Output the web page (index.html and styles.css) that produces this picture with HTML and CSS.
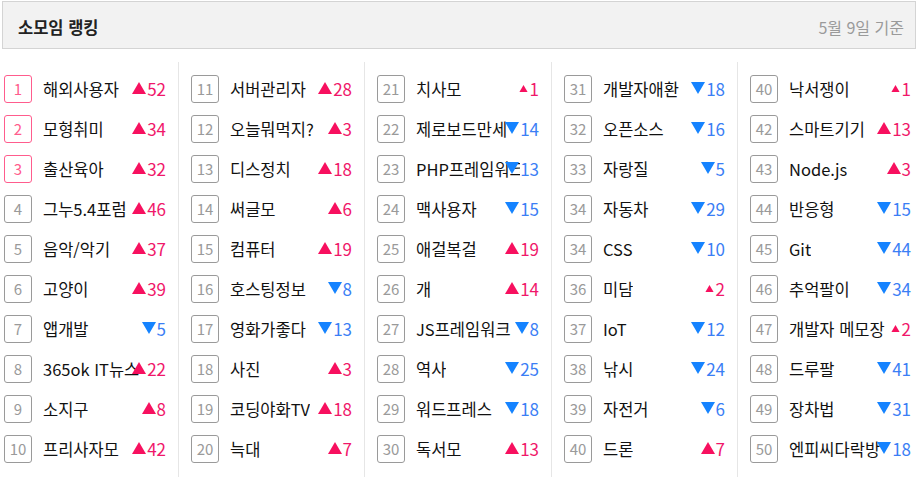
FILE: index.html
```html
<!DOCTYPE html>
<html lang="ko">
<head>
<meta charset="utf-8">
<title>소모임 랭킹</title>
<link rel="stylesheet" href="styles.css">
</head>
<body>
<div class="header">
  <h2 class="title">소모임 랭킹</h2>
  <span class="date">5월 9일 기준</span>
</div>
<div class="ranking">
  <ul class="col">
    <li class="row top"><span class="rank">1</span><span class="name">해외사용자</span><span class="chg up"><svg class="tri" viewBox="0 0 14 12"><polygon points="7,0 14,12 0,12"/></svg>52</span></li>
    <li class="row top"><span class="rank">2</span><span class="name">모형취미</span><span class="chg up"><svg class="tri" viewBox="0 0 14 12"><polygon points="7,0 14,12 0,12"/></svg>34</span></li>
    <li class="row top"><span class="rank">3</span><span class="name">출산육아</span><span class="chg up"><svg class="tri" viewBox="0 0 14 12"><polygon points="7,0 14,12 0,12"/></svg>32</span></li>
    <li class="row"><span class="rank">4</span><span class="name">그누5.4포럼</span><span class="chg up"><svg class="tri" viewBox="0 0 14 12"><polygon points="7,0 14,12 0,12"/></svg>46</span></li>
    <li class="row"><span class="rank">5</span><span class="name">음악/악기</span><span class="chg up"><svg class="tri" viewBox="0 0 14 12"><polygon points="7,0 14,12 0,12"/></svg>37</span></li>
    <li class="row"><span class="rank">6</span><span class="name">고양이</span><span class="chg up"><svg class="tri" viewBox="0 0 14 12"><polygon points="7,0 14,12 0,12"/></svg>39</span></li>
    <li class="row"><span class="rank">7</span><span class="name">앱개발</span><span class="chg down"><svg class="tri" viewBox="0 0 14 12"><polygon points="0,0 14,0 7,12"/></svg>5</span></li>
    <li class="row"><span class="rank">8</span><span class="name">365ok IT뉴스</span><span class="chg up"><svg class="tri" viewBox="0 0 14 12"><polygon points="7,0 14,12 0,12"/></svg>22</span></li>
    <li class="row"><span class="rank">9</span><span class="name">소지구</span><span class="chg up"><svg class="tri" viewBox="0 0 14 12"><polygon points="7,0 14,12 0,12"/></svg>8</span></li>
    <li class="row"><span class="rank">10</span><span class="name">프리사자모</span><span class="chg up"><svg class="tri" viewBox="0 0 14 12"><polygon points="7,0 14,12 0,12"/></svg>42</span></li>
  </ul>
  <ul class="col">
    <li class="row"><span class="rank">11</span><span class="name">서버관리자</span><span class="chg up"><svg class="tri" viewBox="0 0 14 12"><polygon points="7,0 14,12 0,12"/></svg>28</span></li>
    <li class="row"><span class="rank">12</span><span class="name">오늘뭐먹지?</span><span class="chg up"><svg class="tri" viewBox="0 0 14 12"><polygon points="7,0 14,12 0,12"/></svg>3</span></li>
    <li class="row"><span class="rank">13</span><span class="name">디스정치</span><span class="chg up"><svg class="tri" viewBox="0 0 14 12"><polygon points="7,0 14,12 0,12"/></svg>18</span></li>
    <li class="row"><span class="rank">14</span><span class="name">써글모</span><span class="chg up"><svg class="tri" viewBox="0 0 14 12"><polygon points="7,0 14,12 0,12"/></svg>6</span></li>
    <li class="row"><span class="rank">15</span><span class="name">컴퓨터</span><span class="chg up"><svg class="tri" viewBox="0 0 14 12"><polygon points="7,0 14,12 0,12"/></svg>19</span></li>
    <li class="row"><span class="rank">16</span><span class="name">호스팅정보</span><span class="chg down"><svg class="tri" viewBox="0 0 14 12"><polygon points="0,0 14,0 7,12"/></svg>8</span></li>
    <li class="row"><span class="rank">17</span><span class="name">영화가좋다</span><span class="chg down"><svg class="tri" viewBox="0 0 14 12"><polygon points="0,0 14,0 7,12"/></svg>13</span></li>
    <li class="row"><span class="rank">18</span><span class="name">사진</span><span class="chg up"><svg class="tri" viewBox="0 0 14 12"><polygon points="7,0 14,12 0,12"/></svg>3</span></li>
    <li class="row"><span class="rank">19</span><span class="name">코딩야화TV</span><span class="chg up"><svg class="tri" viewBox="0 0 14 12"><polygon points="7,0 14,12 0,12"/></svg>18</span></li>
    <li class="row"><span class="rank">20</span><span class="name">늑대</span><span class="chg up"><svg class="tri" viewBox="0 0 14 12"><polygon points="7,0 14,12 0,12"/></svg>7</span></li>
  </ul>
  <ul class="col">
    <li class="row"><span class="rank">21</span><span class="name">치사모</span><span class="chg up"><svg class="tri sm" viewBox="0 0 14 12"><polygon points="7,0 14,12 0,12"/></svg>1</span></li>
    <li class="row"><span class="rank">22</span><span class="name">제로보드만세</span><span class="chg down"><svg class="tri" viewBox="0 0 14 12"><polygon points="0,0 14,0 7,12"/></svg>14</span></li>
    <li class="row"><span class="rank">23</span><span class="name">PHP프레임워크</span><span class="chg down"><svg class="tri" viewBox="0 0 14 12"><polygon points="0,0 14,0 7,12"/></svg>13</span></li>
    <li class="row"><span class="rank">24</span><span class="name">맥사용자</span><span class="chg down"><svg class="tri" viewBox="0 0 14 12"><polygon points="0,0 14,0 7,12"/></svg>15</span></li>
    <li class="row"><span class="rank">25</span><span class="name">애걸복걸</span><span class="chg up"><svg class="tri" viewBox="0 0 14 12"><polygon points="7,0 14,12 0,12"/></svg>19</span></li>
    <li class="row"><span class="rank">26</span><span class="name">개</span><span class="chg up"><svg class="tri" viewBox="0 0 14 12"><polygon points="7,0 14,12 0,12"/></svg>14</span></li>
    <li class="row"><span class="rank">27</span><span class="name">JS프레임워크</span><span class="chg down"><svg class="tri" viewBox="0 0 14 12"><polygon points="0,0 14,0 7,12"/></svg>8</span></li>
    <li class="row"><span class="rank">28</span><span class="name">역사</span><span class="chg down"><svg class="tri" viewBox="0 0 14 12"><polygon points="0,0 14,0 7,12"/></svg>25</span></li>
    <li class="row"><span class="rank">29</span><span class="name">워드프레스</span><span class="chg down"><svg class="tri" viewBox="0 0 14 12"><polygon points="0,0 14,0 7,12"/></svg>18</span></li>
    <li class="row"><span class="rank">30</span><span class="name">독서모</span><span class="chg up"><svg class="tri" viewBox="0 0 14 12"><polygon points="7,0 14,12 0,12"/></svg>13</span></li>
  </ul>
  <ul class="col">
    <li class="row"><span class="rank">31</span><span class="name">개발자애환</span><span class="chg down"><svg class="tri" viewBox="0 0 14 12"><polygon points="0,0 14,0 7,12"/></svg>18</span></li>
    <li class="row"><span class="rank">32</span><span class="name">오픈소스</span><span class="chg down"><svg class="tri" viewBox="0 0 14 12"><polygon points="0,0 14,0 7,12"/></svg>16</span></li>
    <li class="row"><span class="rank">33</span><span class="name">자랑질</span><span class="chg down"><svg class="tri" viewBox="0 0 14 12"><polygon points="0,0 14,0 7,12"/></svg>5</span></li>
    <li class="row"><span class="rank">34</span><span class="name">자동차</span><span class="chg down"><svg class="tri" viewBox="0 0 14 12"><polygon points="0,0 14,0 7,12"/></svg>29</span></li>
    <li class="row"><span class="rank">34</span><span class="name">CSS</span><span class="chg down"><svg class="tri" viewBox="0 0 14 12"><polygon points="0,0 14,0 7,12"/></svg>10</span></li>
    <li class="row"><span class="rank">36</span><span class="name">미담</span><span class="chg up"><svg class="tri sm" viewBox="0 0 14 12"><polygon points="7,0 14,12 0,12"/></svg>2</span></li>
    <li class="row"><span class="rank">37</span><span class="name">IoT</span><span class="chg down"><svg class="tri" viewBox="0 0 14 12"><polygon points="0,0 14,0 7,12"/></svg>12</span></li>
    <li class="row"><span class="rank">38</span><span class="name">낚시</span><span class="chg down"><svg class="tri" viewBox="0 0 14 12"><polygon points="0,0 14,0 7,12"/></svg>24</span></li>
    <li class="row"><span class="rank">39</span><span class="name">자전거</span><span class="chg down"><svg class="tri" viewBox="0 0 14 12"><polygon points="0,0 14,0 7,12"/></svg>6</span></li>
    <li class="row"><span class="rank">40</span><span class="name">드론</span><span class="chg up"><svg class="tri" viewBox="0 0 14 12"><polygon points="7,0 14,12 0,12"/></svg>7</span></li>
  </ul>
  <ul class="col">
    <li class="row"><span class="rank">40</span><span class="name">낙서쟁이</span><span class="chg up"><svg class="tri sm" viewBox="0 0 14 12"><polygon points="7,0 14,12 0,12"/></svg>1</span></li>
    <li class="row"><span class="rank">42</span><span class="name">스마트기기</span><span class="chg up"><svg class="tri" viewBox="0 0 14 12"><polygon points="7,0 14,12 0,12"/></svg>13</span></li>
    <li class="row"><span class="rank">43</span><span class="name">Node.js</span><span class="chg up"><svg class="tri" viewBox="0 0 14 12"><polygon points="7,0 14,12 0,12"/></svg>3</span></li>
    <li class="row"><span class="rank">44</span><span class="name">반응형</span><span class="chg down"><svg class="tri" viewBox="0 0 14 12"><polygon points="0,0 14,0 7,12"/></svg>15</span></li>
    <li class="row"><span class="rank">45</span><span class="name">Git</span><span class="chg down"><svg class="tri" viewBox="0 0 14 12"><polygon points="0,0 14,0 7,12"/></svg>44</span></li>
    <li class="row"><span class="rank">46</span><span class="name">추억팔이</span><span class="chg down"><svg class="tri" viewBox="0 0 14 12"><polygon points="0,0 14,0 7,12"/></svg>34</span></li>
    <li class="row"><span class="rank">47</span><span class="name">개발자 메모장</span><span class="chg up"><svg class="tri sm" viewBox="0 0 14 12"><polygon points="7,0 14,12 0,12"/></svg>2</span></li>
    <li class="row"><span class="rank">48</span><span class="name">드루팔</span><span class="chg down"><svg class="tri" viewBox="0 0 14 12"><polygon points="0,0 14,0 7,12"/></svg>41</span></li>
    <li class="row"><span class="rank">49</span><span class="name">장차법</span><span class="chg down"><svg class="tri" viewBox="0 0 14 12"><polygon points="0,0 14,0 7,12"/></svg>31</span></li>
    <li class="row"><span class="rank">50</span><span class="name">엔피씨다락방</span><span class="chg down"><svg class="tri" viewBox="0 0 14 12"><polygon points="0,0 14,0 7,12"/></svg>18</span></li>
  </ul>
</div>
</body>
</html>
```
FILE: styles.css
```css
* { box-sizing: border-box; }
html, body { margin: 0; padding: 0; background: #fff; }
body {
  font-family: "Noto Sans CJK KR", "Noto Sans", sans-serif;
  color: #222;
  overflow: hidden;
}
.header {
  margin: 1px 7px 0 2px;
  height: 48px;
  border: 1px solid #d4d4d4;
  background: #f2f2f2;
  display: flex;
  align-items: center;
  justify-content: space-between;
  padding: 3px 11px 0 15px;
}
.title {
  margin: 0;
  font-size: 16.5px;
  font-weight: 700;
  color: #222;
  line-height: 20px;
}
.date {
  font-size: 16px;
  color: #9a9a9a;
  line-height: 20px;
}
.ranking {
  margin-top: 13px;
  display: grid;
  grid-template-columns: 179px 186px 187px 186px 185px;
}
.col {
  list-style: none;
  margin: 0;
  padding: 7px 12px 8px 12px;
  border-right: 1px solid #e6e6e6;
}
.col:first-child { padding-left: 4px; }
.col:last-child { border-right: 0; }
.row {
  position: relative;
  height: 40px;
  display: flex;
  align-items: center;
}
.rank {
  flex: none;
  width: 28px;
  height: 28px;
  border: 1px solid #9a9a9a;
  border-radius: 3px;
  color: #9a9a9a;
  font-size: 15px;
  line-height: 26px;
  text-align: center;
}
.top .rank {
  border-color: #ff5c8d;
  color: #ff5c8d;
}
.name {
  margin-left: 11px;
  max-width: 104px;
  overflow: hidden;
  font-size: 16.5px;
  line-height: 22px;
  white-space: nowrap;
  color: #111;
}
.chg {
  position: absolute;
  right: 0;
  top: 0;
  height: 40px;
  display: flex;
  align-items: center;
  font-size: 17px;
  line-height: 20px;
  padding-bottom: 1px;
}
.tri {
  width: 14px;
  height: 12px;
  margin-right: 1px;
  margin-bottom: 1px;
}
.tri.sm {
  width: 9px;
  height: 7px;
  margin-right: 2px;
  margin-bottom: 0;
}
.up { color: #f0176a; }
.up .tri { fill: #f7105f; }
.down { color: #3b7ef5; }
.down .tri { fill: #1583ff; }
```
